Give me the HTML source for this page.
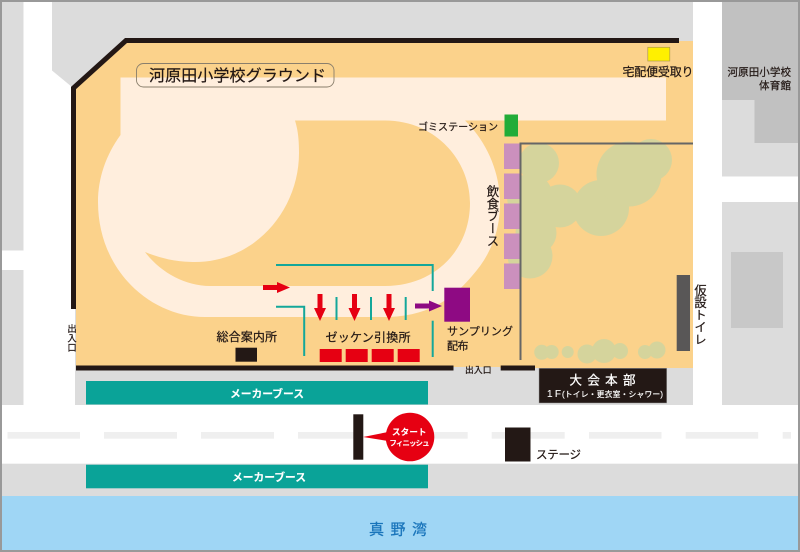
<!DOCTYPE html>
<html lang="ja"><head><meta charset="utf-8"><title>河原田小学校グラウンド</title>
<style>
html,body{margin:0;padding:0;background:#fff}
svg{display:block}
text{font-family:"Liberation Sans","Noto Sans CJK JP",sans-serif;fill:#231815;stroke:#231815;stroke-width:.22px}
.v{writing-mode:vertical-rl;text-orientation:mixed}
.w{fill:#fff;stroke:#fff;font-weight:700;stroke-width:.1px}
.m{font-weight:400;stroke-width:.25px}
</style></head><body>
<svg width="800" height="552" viewBox="0 0 800 552" xmlns="http://www.w3.org/2000/svg">
<rect width="800" height="552" fill="#dcdcdc"/>
<!-- roads -->
<path d="M23.500 2H52V70.500L72 87H75V405H23.500Z" fill="#fff"/>
<rect x="0" y="250.500" width="23.500" height="19.500" fill="#fff"/>
<rect x="0" y="405" width="800" height="58.700" fill="#fff"/>
<rect x="693" y="0" width="29" height="405" fill="#fff"/>
<rect x="722" y="176.500" width="78" height="25.500" fill="#fff"/>
<path d="M722 2H798V143H754.500V100H722Z" fill="#c1c1c1"/>
<rect x="731" y="252" width="52" height="76" fill="#c8c8c8"/>
<rect x="0" y="496" width="800" height="56" fill="#9fd6f5"/>
<!-- field -->
<path d="M126 41H693V368H500V367H76V90L72 87Z" fill="#fbd28b"/>
<path d="M120.500 77.500H666V120.500H465C485 140 500 170 500 203C500 235 488 258 472 276C455 296 430 317 385 317H205C150 317 98 270 98 202C98 178 106 155 120.500 135Z" fill="#ffeedd"/>
<path d="M295 120.500H385C435 120.500 470 160 470 203C470 250 435 286 385 286H210C185 286 160 272 145 252C165 260 180 262 195 262C255 262 299 210 299 153C299 140 298 130 295 120.500Z" fill="#fbd28b"/>
<!-- trees -->
<g fill="#d5d49c">
<circle cx="539" cy="163" r="20"/><circle cx="530" cy="197" r="23"/><circle cx="560" cy="206" r="21.500"/>
<circle cx="601" cy="208" r="28"/><circle cx="629" cy="174" r="32.500"/><circle cx="651" cy="160" r="21"/>
<circle cx="536" cy="233" r="20.500"/><circle cx="530" cy="256" r="22.500"/>
<circle cx="541.700" cy="352.300" r="7.500"/><circle cx="551.700" cy="352" r="7"/><circle cx="567.700" cy="352" r="6"/>
<circle cx="587" cy="354" r="9.500"/><circle cx="604" cy="351" r="12"/><circle cx="620" cy="351" r="8"/>
<circle cx="645" cy="352" r="7"/><circle cx="657" cy="350" r="8.500"/>
</g>
<!-- booths -->
<g fill="#cb90bd">
<rect x="504" y="143.500" width="16" height="25.500"/><rect x="504" y="173.500" width="16" height="25.500"/>
<rect x="504" y="203.500" width="16" height="25.500"/><rect x="504" y="233.500" width="16" height="25.500"/>
<rect x="504" y="263.500" width="16" height="25.500"/>
</g>
<rect x="504.500" y="114.500" width="13.500" height="22" fill="#22ac38"/>
<rect x="647.800" y="47.300" width="22" height="13.700" fill="#fff000" stroke="#b09a50" stroke-width="0.700"/>
<!-- fence -->
<path d="M693 143.500H520.500V360" fill="none" stroke="#666" stroke-width="2"/>
<rect x="676.700" y="275" width="13.300" height="76" fill="#595757"/>
<!-- walls -->
<path d="M679 40.500H126L73.500 88V309" fill="none" stroke="#231815" stroke-width="5"/>
<rect x="76" y="365.500" width="377.500" height="5" fill="#231815"/>
<rect x="500.700" y="365.500" width="34.300" height="5" fill="#231815"/>
<!-- teal lines -->
<g fill="none" stroke="#14a79a" stroke-width="2">
<path d="M276 265H432.700V291"/><path d="M432.700 320.700V357"/><path d="M276 306.700H304.200V356"/>
<path d="M336.500 297V320M371 297V320M405.700 297V320"/>
</g>
<!-- arrows -->
<g fill="#e60012">
<path d="M317.500 294H322.500V308H326L320 321L314 308H317.500Z"/>
<path d="M352 294H357V308H360.500L354.500 321L348.500 308H352Z"/>
<path d="M386.500 294H391.500V308H395L389 321L383 308H386.500Z"/>
<path d="M263 285H277V282L290 287.500L277 293V290H263Z"/>
<rect x="319.700" y="349" width="22" height="13"/><rect x="345.700" y="349" width="22" height="13"/>
<rect x="371.700" y="349" width="22" height="13"/><rect x="397.700" y="349" width="22" height="13"/>
</g>
<path d="M415 303.500H429V300.500L442 306L429 311.500V308.500H415Z" fill="#8e0a83"/>
<rect x="444.300" y="287.700" width="25.700" height="34" fill="#8e0a83"/>
<rect x="235.500" y="347.700" width="21.500" height="14" fill="#231815"/>
<!-- maker booths -->
<rect x="86" y="381" width="342" height="23.500" fill="#0aa398"/>
<rect x="86" y="464.700" width="342" height="23.600" fill="#0aa398"/>
<!-- road dashes -->
<g fill="#efefef">
<rect x="7.500" y="432" width="72.500" height="6.700"/><rect x="104" y="432" width="73" height="6.700"/>
<rect x="201" y="432" width="73" height="6.700"/><rect x="298" y="432" width="60" height="6.700"/>
<rect x="430" y="432" width="37.700" height="6.700"/><rect x="491.700" y="432" width="73" height="6.700"/>
<rect x="589" y="432" width="72.500" height="6.700"/><rect x="685.700" y="432" width="72.500" height="6.700"/>
<rect x="782.700" y="432" width="8.300" height="6.700"/>
</g>
<!-- start -->
<rect x="353.300" y="414.300" width="10" height="45.400" fill="#231815"/>
<path d="M363 437L388 432V441Z" fill="#e60012"/>
<circle cx="410" cy="437" r="24.300" fill="#e60012"/>
<rect x="505" y="427.500" width="25.500" height="34" fill="#231815"/>
<rect x="539" y="368.300" width="127.700" height="34.700" fill="#231815" stroke="#999" stroke-width="0.500"/>
<rect x="136.500" y="63.500" width="197.500" height="23.500" rx="7" fill="none" stroke="#8a7f6c" stroke-width="0.900"/>
<!-- labels -->
<text x="149" y="81" font-size="16" textLength="177">河原田小学校グラウンド</text>
<text x="622.500" y="76" font-size="12" textLength="71">宅配便受取り</text>
<text x="727.500" y="75.500" font-size="10.500" textLength="63.500">河原田小学校</text>
<text x="759" y="89" font-size="10.500" textLength="32">体育館</text>
<text x="418" y="130.500" font-size="10" textLength="80">ゴミステーション</text>
<text x="492" y="185" font-size="12.400" class="v" textLength="62">飲食ブース</text>
<text x="699.500" y="284" font-size="12.300" class="v" textLength="61.500">仮設トイレ</text>
<text x="71" y="324" font-size="9.300" class="v" textLength="28">出入口</text>
<text x="216.500" y="341" font-size="12" textLength="60.500">総合案内所</text>
<text x="325.500" y="341.500" font-size="12" textLength="85">ゼッケン引換所</text>
<text x="447" y="335" font-size="11" textLength="66">サンプリング</text>
<text x="447" y="349.500" font-size="11" textLength="21.500">配布</text>
<text x="465" y="373" font-size="8.800" textLength="26.500">出入口</text>
<text x="569.500" y="384.500" font-size="12.500" class="w" style="font-weight:400;stroke-width:.3px" textLength="66">大会本部</text>
<text x="547" y="397" font-size="10" class="w" style="font-weight:400" textLength="14">1F</text>
<text x="562" y="397" font-size="7.800" class="w" style="font-weight:400;stroke-width:.2px" textLength="101">(トイレ・更衣室・シャワー)</text>
<text x="536" y="458.500" font-size="11.500" textLength="45">ステージ</text>
<text x="230" y="397.500" font-size="10.800" class="w" textLength="74">メーカーブース</text>
<text x="232" y="481" font-size="10.800" class="w" textLength="74">メーカーブース</text>
<text x="392" y="435" font-size="8.500" class="w" textLength="34.500">スタート</text>
<text x="389.500" y="445.500" font-size="7.300" class="w" textLength="40">フィニッシュ</text>
<text x="369" y="534.500" font-size="15" style="fill:#1a75bb;stroke:#1a75bb;stroke-width:.3px" textLength="58">真野湾</text>
<!-- frame -->
<rect x="1" y="1" width="798" height="550" fill="none" stroke="#999" stroke-width="2"/>
</svg>
</body></html>
